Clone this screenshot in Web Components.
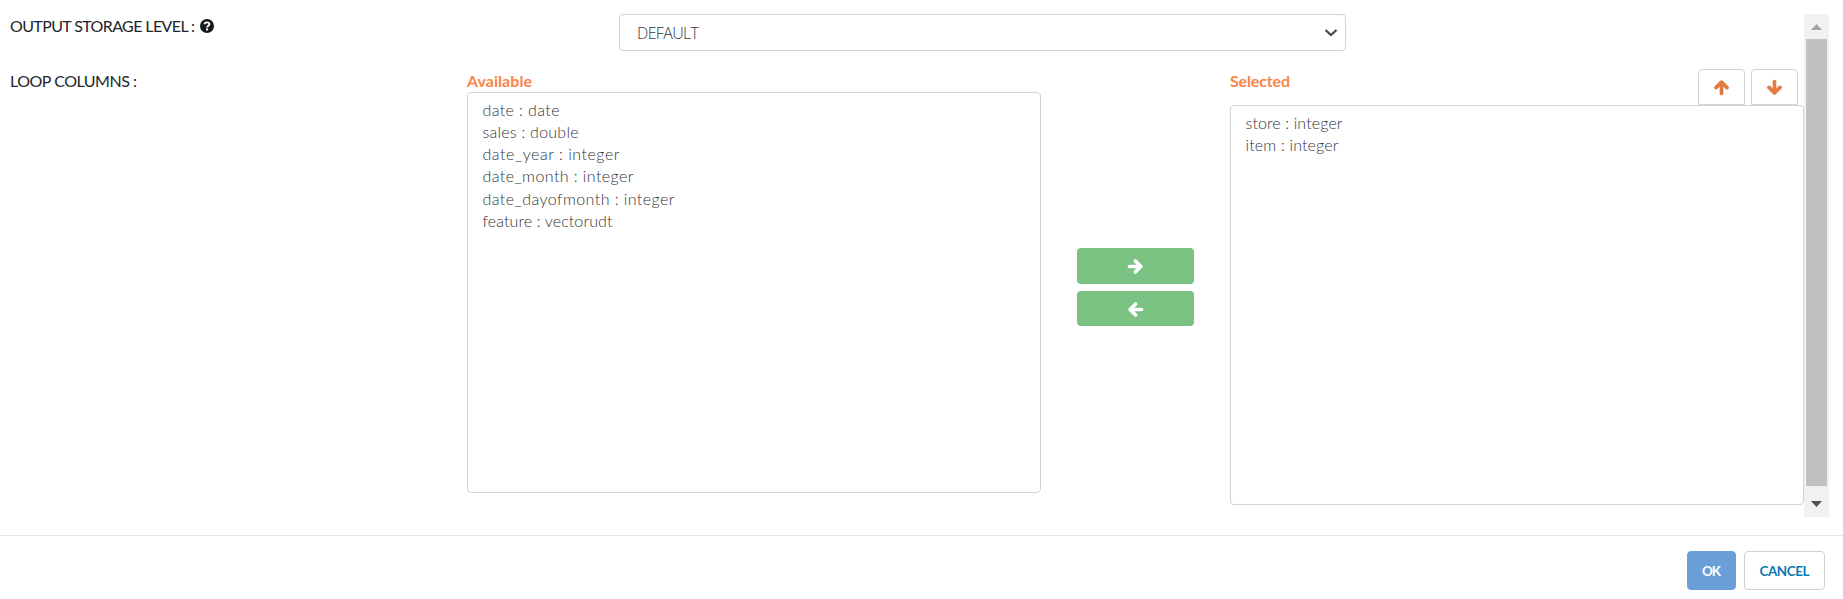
<!DOCTYPE html>
<html lang="en"><head><meta charset="utf-8"><title>Loop columns</title>
<style>
html,body{margin:0;background:#fff}
body{font-family:Lato,"Open Sans",sans-serif;font-size:16px;color:#212529}
</style></head><body><loop-dialog></loop-dialog>
<script>
const define=(name,html,setup)=>customElements.define(name,class extends HTMLElement{
  connectedCallback(){
    if(this.shadowRoot)return;
    const t=document.createElement('template');t.innerHTML=html;
    this.attachShadow({mode:'open'}).append(t.content.cloneNode(true));
    if(setup)setup(this,this.shadowRoot);
  }
});
/* text tracked out or in to a set measure */
define('fit-text','<style>:host{display:inline-block;white-space:nowrap}span{display:inline-block}</style><span><slot></slot></span>',(el,root)=>{
  const s=root.querySelector('span'),w=+el.getAttribute('measure');
  const n=el.textContent.length;
  s.style.letterSpacing=((w-s.getBoundingClientRect().width)/(n-1))+'px';
  el.style.width=w+'px';
});
const turns={right:0,down:90,left:180,up:270};
define('arrow-icon','<style>:host{display:block;width:15px;height:15px}svg{display:block;overflow:visible}</style><svg width="15" height="15" viewBox="0 0 15 15" fill="none" stroke="currentColor" stroke-width="3.7" stroke-linejoin="round"><g><path d="M1.5 7.5H12" stroke-linecap="round"/><path d="M7.4 2L12.9 7.5L7.4 13" stroke-linecap="round"/></g></svg>',(el,r)=>r.querySelector('g').setAttribute('transform',`rotate(${turns[el.getAttribute('dir')]} 7.5 7.5)`));
define('help-icon','<style>:host{display:block;width:14px;height:14px}svg{display:block}</style><svg width="14" height="14" viewBox="0 0 14 14"><circle cx="7" cy="7" r="7" fill="#17191c"/><path d="M4.6 5.3C4.8 2.7 9.4 2.7 9.4 5.2C9.4 6.8 7.1 6.8 7.1 8.5" fill="none" stroke="#fff" stroke-width="1.9"/><rect x="6" y="9.5" width="2.1" height="1.9" fill="#fff"/></svg>');
define('select-box',`<style>:host{display:flex;box-sizing:border-box;width:727px;height:37px;border:1px solid #ced4da;border-radius:4px;align-items:center;justify-content:space-between;padding:1px 7px 0 17px;font:300 16px "Open Sans",sans-serif;color:#343a40}svg{display:block}</style>
<slot></slot><svg width="14" height="9" fill="none" stroke="#444b52" stroke-width="2.3"><path d="M1.5 1L7 6L12.5 1"/></svg>`);
define('option-list',`<style>:host{display:block;box-sizing:border-box;width:574px;border:1px solid #ced4da;border-radius:4px;padding:6px 0 0 14.5px;color:#30353b;font-weight:300}</style><slot></slot>`);
define('option-row','<style>:host{display:block;height:22.15px;line-height:22.15px;font-size:16px}</style><slot></slot>');
define('move-button','<style>:host{display:flex;align-items:center;justify-content:center;background:#79c282;color:#fff;border-radius:4px;width:117px;height:36px;padding-bottom:0;box-sizing:border-box}</style><slot></slot>');
define('order-button','<style>:host{display:flex;box-sizing:border-box;width:47px;height:36px;border:1px solid #ced4da;border-radius:4px 4px 0 0;align-items:center;justify-content:center;color:#e37b40}</style><slot></slot>');
define('dialog-button','<style>:host{display:flex;box-sizing:border-box;width:81px;height:39px;border:1px solid #cdd0dc;border-radius:4px;align-items:center;justify-content:center;font-size:13.4px;font-weight:700;color:#0879b4}:host([primary]){width:49px;background:#6a9fd9;border-color:#6a9fd9;color:#fff}</style><slot></slot>');
define('scroll-track',`<style>:host{display:flex;flex-direction:column;align-items:center;width:25px;height:503px;background:#f1f1f1}div{width:21px;height:447px;background:#c1c1c1}svg{display:block}</style>
<svg width="25" height="25"><path d="M7 16L12.5 10L18 16Z" fill="#a3a3a3"/></svg><div></div><svg width="25" height="31"><path d="M7 15L12.5 21L18 15Z" fill="#505050"/></svg>`);
define('loop-dialog',`<style>
:host{display:grid;grid-template-rows:535px 64px;width:1843px;height:599px;overflow:hidden}
main{display:flex;padding-top:14px}
.form{width:1804px}
.row{display:flex;height:55px}
.label{display:flex;width:609px;padding-left:10px;line-height:24px;align-items:flex-start}
.label help-icon{margin:5px 0 0 5px}
.columns{display:flex;height:450px}
.columns .label{width:457px}
.caption{display:block;line-height:24px;height:24px;color:#fb8447;font-weight:700}
.available{width:574px}
.available option-list{height:401px;margin-top:-1px}
.moves{width:117px;margin:179px 36px 0;display:flex;flex-direction:column;gap:7px}
.moves move-button:last-child{height:35px;padding-top:1px}
.selected{width:574px}
.head{display:flex;justify-content:space-between;height:36px;padding-right:6px}
.order{display:flex;gap:6px}
.selected option-list{height:400px}
footer{display:flex;gap:8px;justify-content:flex-end;box-sizing:border-box;border-top:1px solid #e7e8ea;padding:15px 18px 0 0}
</style>
<main><div class="form">
<div class="row"><div class="label"><fit-text measure="185">OUTPUT STORAGE LEVEL :</fit-text><help-icon></help-icon></div><select-box><fit-text measure="62">DEFAULT</fit-text></select-box></div>
<div class="columns"><div class="label"><fit-text measure="127">LOOP COLUMNS :</fit-text></div>
<div class="available"><div class="caption"><fit-text measure="65">Available</fit-text></div><option-list>
<option-row><fit-text measure="77">date : date</fit-text></option-row><option-row><fit-text measure="96">sales : double</fit-text></option-row><option-row><fit-text measure="137">date_year : integer</fit-text></option-row><option-row><fit-text measure="151">date_month : integer</fit-text></option-row><option-row><fit-text measure="192">date_dayofmonth : integer</fit-text></option-row><option-row><fit-text measure="130">feature : vectorudt</fit-text></option-row></option-list></div>
<div class="moves"><move-button><arrow-icon dir="right"></arrow-icon></move-button><move-button><arrow-icon dir="left"></arrow-icon></move-button></div>
<div class="selected"><div class="head"><div class="caption"><fit-text measure="60">Selected</fit-text></div><div class="order"><order-button><arrow-icon dir="up"></arrow-icon></order-button><order-button><arrow-icon dir="down"></arrow-icon></order-button></div></div>
<option-list><option-row><fit-text measure="97">store : integer</fit-text></option-row><option-row><fit-text measure="93">item : integer</fit-text></option-row></option-list></div></div>
</div><scroll-track></scroll-track></main>
<footer><dialog-button primary><fit-text measure="19">OK</fit-text></dialog-button><dialog-button><fit-text measure="50">CANCEL</fit-text></dialog-button></footer>`);
</script></body></html>
